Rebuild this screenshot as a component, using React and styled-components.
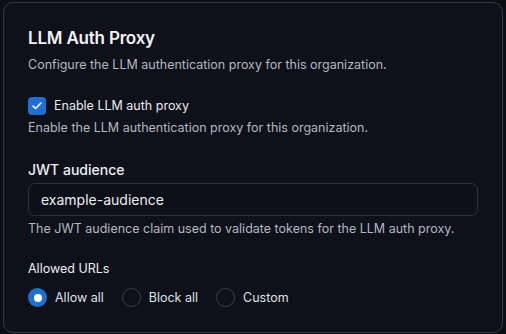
import { createGlobalStyle } from 'styled-components';
import styled from 'styled-components';
import { useState } from 'react';

const GlobalStyle = createGlobalStyle`
  html, body {
    margin: 0;
    background: #0c0e15;
    font-family: Inter, "Noto Sans", sans-serif;
    color: #e8eaf0;
  }
`;

const Page = styled.div`
  padding: 2px 3px 1px 3px;
`;

const Card = styled.div`
  border: 1px solid #353946;
  border-radius: 10px;
  background: #0e1119;
  padding: 22px 24px 22px 24px;
  height: 331px;
  box-sizing: border-box;
  display: flex;
  flex-direction: column;
`;

const Title = styled.h2`
  margin: 0;
  font-size: 17px;
  font-weight: 600;
  letter-spacing: -0.2px;
  line-height: 26px;
  color: #f2f3f6;
`;

const Description = styled.p`
  margin: 0;
  font-size: 12.5px;
  line-height: 20px;
  color: #b3b7c2;
  margin-top: ${(p) => p.$top || 0}px;
`;

const CheckRow = styled.label`
  display: flex;
  align-items: center;
  gap: 8px;
  margin-top: 21px;
  font-size: 12.5px;
  color: #e8eaf0;
  line-height: 20px;
`;

const CheckBox = styled.span`
  width: 18px;
  height: 18px;
  border-radius: 4px;
  background: #1f6fd1;
  display: flex;
  align-items: center;
  justify-content: center;
`;

const Field = styled.div`
  display: flex;
  flex-direction: column;
  margin-top: ${(p) => p.$top}px;
`;

const FieldLabel = styled.div`
  font-size: ${(p) => p.$size || 14}px;
  font-weight: ${(p) => p.$weight || 500};
  line-height: 20px;
  color: #eceef3;
`;

const Input = styled.input`
  margin-top: 3px;
  height: 33px;
  box-sizing: border-box;
  width: 450px;
  background: #0d1018;
  border: 1px solid #2c303c;
  border-radius: 7px;
  padding: 0 12px;
  font-family: inherit;
  font-size: 14px;
  color: #eceef3;
  outline: none;
`;

const RadioGroup = styled.div`
  display: flex;
  align-items: center;
  gap: 18px;
  margin-top: 9px;
`;

const RadioItem = styled.label`
  display: flex;
  align-items: center;
  gap: 8px;
  font-size: 12.5px;
  color: #dfe2e9;
  cursor: pointer;
`;

const RadioCircle = styled.span`
  width: 19px;
  height: 19px;
  box-sizing: border-box;
  border-radius: 50%;
  border: ${(p) => (p.$on ? 'none' : '1px solid #3a3e4c')};
  background: ${(p) => (p.$on ? '#1f6fd1' : 'transparent')};
  display: flex;
  align-items: center;
  justify-content: center;
  &::after {
    content: '';
    display: ${(p) => (p.$on ? 'block' : 'none')};
    width: 8px;
    height: 8px;
    border-radius: 50%;
    background: #ffffff;
  }
`;

const options = ['Allow all', 'Block all', 'Custom'];

export default function App() {
  const [allowed, setAllowed] = useState('Allow all');
  return (
    <Page>
      <GlobalStyle />
      <Card>
        <Title>LLM Auth Proxy</Title>
        <Description $top={4}>Configure the LLM authentication proxy for this organization.</Description>
        <CheckRow>
          <CheckBox>
            <svg width="12" height="12" viewBox="0 0 24 24" fill="none" stroke="#fff" strokeWidth="3" strokeLinecap="round" strokeLinejoin="round">
              <polyline points="20 6 9 17 4 12" />
            </svg>
          </CheckBox>
          Enable LLM auth proxy
        </CheckRow>
        <Description $top={2}>Enable the LLM authentication proxy for this organization.</Description>
        <Field $top={22}>
          <FieldLabel>JWT audience</FieldLabel>
          <Input defaultValue="example-audience" />
          <Description $top={3}>The JWT audience claim used to validate tokens for the LLM auth proxy.</Description>
        </Field>
        <Field $top={20}>
          <FieldLabel $size={12.5} $weight={400}>Allowed URLs</FieldLabel>
          <RadioGroup>
            {options.map((o) => (
              <RadioItem key={o} onClick={() => setAllowed(o)}>
                <RadioCircle $on={allowed === o} />
                {o}
              </RadioItem>
            ))}
          </RadioGroup>
        </Field>
      </Card>
    </Page>
  );
}
